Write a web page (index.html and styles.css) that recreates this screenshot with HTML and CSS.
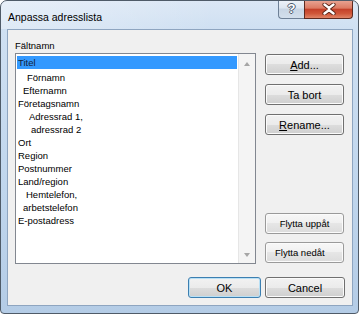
FILE: index.html
```html
<!DOCTYPE html>
<html lang="sv">
<head>
  <meta charset="UTF-8" />
  <meta name="viewport" content="width=device-width, initial-scale=1.0" />
  <title>Anpassa adresslista</title>
  <link rel="stylesheet" href="styles.css">
</head>
<body>
  <div class="window">
    <div class="titlebar">
      <span class="title">Anpassa adresslista</span>
      <div class="caption-btns">
        <div class="cap-help">?</div>
        <div class="cap-close">
          <svg width="14" height="12" viewBox="0 0 14 12">
            <path d="M2.5 1.5 L7 5 L11.5 1.5 M2.5 10.5 L7 7 L11.5 10.5" fill="none" stroke="#5a2418" stroke-width="4.2" stroke-linecap="round" />
            <path d="M2.5 1.5 L7 5 L11.5 1.5 M2.5 10.5 L7 7 L11.5 10.5 M7 5 L7 7" fill="none" stroke="#fff" stroke-width="2.4" stroke-linecap="round" />
          </svg>
        </div>
      </div>
    </div>

    <div class="client">
      <div class="main">
        <div class="fields">
          <div class="label">Fältnamn</div>
          <div class="listbox">
            <ul class="items">
              <li class="selected">Titel</li>
              <li class="ind-9">Förnamn</li>
              <li class="ind-5">Efternamn</li>
              <li>Företagsnamn</li>
              <li class="ind-11">Adressrad 1,</li>
              <li class="ind-13">adressrad 2</li>
              <li>Ort</li>
              <li>Region</li>
              <li>Postnummer</li>
              <li>Land/region</li>
              <li class="ind-8">Hemtelefon,</li>
              <li class="ind-5">arbetstelefon</li>
              <li>E-postadress</li>
            </ul>
            <div class="scrollbar">
              <span class="arrow up"></span>
              <span class="arrow down"></span>
            </div>
          </div>
        </div>

        <div class="side">
          <div class="group">
            <button class="btn"><u>A</u>dd...</button>
            <button class="btn">Ta bort</button>
            <button class="btn"><u>R</u>ename...</button>
          </div>
          <div class="group tight">
            <button class="btn small">Flytta uppåt</button>
            <button class="btn small left">Flytta nedåt</button>
          </div>
        </div>
      </div>

      <div class="footer">
        <button class="btn default ok">OK</button>
        <button class="btn cancel">Cancel</button>
      </div>
    </div>
  </div>
</body>
</html>
```

FILE: styles.css
```css
* { box-sizing: border-box; }
body {
  margin: 0;
  padding: 0;
  background: #fff;
  font-family: "Liberation Sans", Arial, sans-serif;
}
.window {
  width: 359px;
  height: 314px;
  display: flex;
  flex-direction: column;
  border: 1px solid #4f5b68;
  border-radius: 7px 7px 4px 4px;
  background: linear-gradient(180deg, #dbe7f5 0, #cfe0f2 28px, #c0d6ed 60%, #b4cce6 100%);
  overflow: hidden;
}
.titlebar {
  height: 28px;
  display: flex;
  justify-content: space-between;
  align-items: flex-start;
  background: linear-gradient(90deg, rgba(255,255,255,0.35), rgba(255,255,255,0) 60%);
}
.title {
  font-size: 10.5px;
  color: #000;
  margin: 10px 0 0 7px;
}
.caption-btns {
  display: flex;
  margin: -1px 5px 0 0;
}
.cap-help {
  width: 26px;
  height: 19px;
  border: 1px solid #6e8096;
  border-top: none;
  border-right: none;
  border-radius: 0 0 0 4px;
  background: linear-gradient(180deg, #eef3f9 0, #dde6f0 45%, #c8d5e4 50%, #d3dfec 100%);
  color: #fff;
  font-weight: bold;
  font-size: 13px;
  text-align: center;
  line-height: 18px;
  text-shadow: -1px 0 #4a5a6e, 1px 0 #4a5a6e, 0 -1px #4a5a6e, 0 1px #4a5a6e;
}
.cap-close {
  width: 49px;
  height: 19px;
  border: 1px solid #5e2a20;
  border-top: none;
  border-radius: 0 0 4px 0;
  background: linear-gradient(180deg, #e9a797 0, #dc7b63 45%, #c4412a 52%, #cf5639 75%, #e08467 100%);
  display: flex;
  align-items: center;
  justify-content: center;
}
.client {
  flex: 1;
  margin: 0 5px 7px 6px;
  border: 1px solid #8ea5c0;
  background: #f0f0f0;
  padding: 9px 7px 7px 7px;
  display: flex;
  flex-direction: column;
}
.main {
  display: flex;
  gap: 9px;
}
.fields {
  width: 241px;
}
.label {
  font-size: 9.5px;
  line-height: 13px;
  margin-bottom: 1px;
  color: #000;
}
.listbox {
  height: 211px;
  border: 1px solid #828790;
  background: #fff;
  display: flex;
}
.items {
  flex: 1;
  list-style: none;
  margin: 0;
  padding: 1px;
  font-size: 9.5px;
  color: #000;
}
.items li {
  height: 13px;
  line-height: 13px;
  padding-left: 1px;
  white-space: nowrap;
}
.items li.selected {
  margin: 1px 0 2px;
  background: #3399ff;
  color: #13233a;
}
.items .ind-5 { padding-left: 6px; }
.items .ind-8 { padding-left: 9px; }
.items .ind-9 { padding-left: 10px; }
.items .ind-11 { padding-left: 12px; }
.items .ind-13 { padding-left: 14px; }
.scrollbar {
  width: 17px;
  background: #f4f4f4;
  border-left: 1px solid #e6e6e6;
  display: flex;
  flex-direction: column;
  justify-content: space-between;
  align-items: center;
  padding: 8px 0 6px;
}
.arrow {
  width: 0;
  height: 0;
  border-left: 3.5px solid transparent;
  border-right: 3.5px solid transparent;
}
.arrow.up { border-bottom: 4px solid #a6a6a6; }
.arrow.down { border-top: 4px solid #a6a6a6; }
.side {
  width: 79px;
  padding: 15px 0 1px;
  display: flex;
  flex-direction: column;
  justify-content: space-between;
}
.group {
  display: flex;
  flex-direction: column;
  gap: 9px;
}
.group.tight { gap: 8px; }
.btn {
  height: 21px;
  padding: 0;
  border: 1px solid #707070;
  border-radius: 3px;
  background: linear-gradient(180deg, #f2f2f2 0, #ebebeb 50%, #dddddd 50%, #cfcfcf 100%);
  box-shadow: inset 0 0 0 1px #fbfbfb;
  font-family: "Liberation Sans", Arial, sans-serif;
  font-size: 11px;
  color: #000;
  text-align: center;
}
.btn.small {
  font-size: 9.5px;
  border-color: #9a9a9a;
  background: linear-gradient(180deg, #f7f7f7 0, #f0f0f0 50%, #e6e6e6 50%, #dcdcdc 100%);
}
.btn.left {
  text-align: left;
  padding-left: 9px;
}
.footer {
  margin-top: 13px;
  display: flex;
  justify-content: flex-end;
  gap: 4px;
}
.ok { width: 73px; }
.cancel { width: 80px; }
.btn.default {
  border-color: #3c7fb1;
  box-shadow: inset 0 0 0 1px #b9e0f5;
}
```
